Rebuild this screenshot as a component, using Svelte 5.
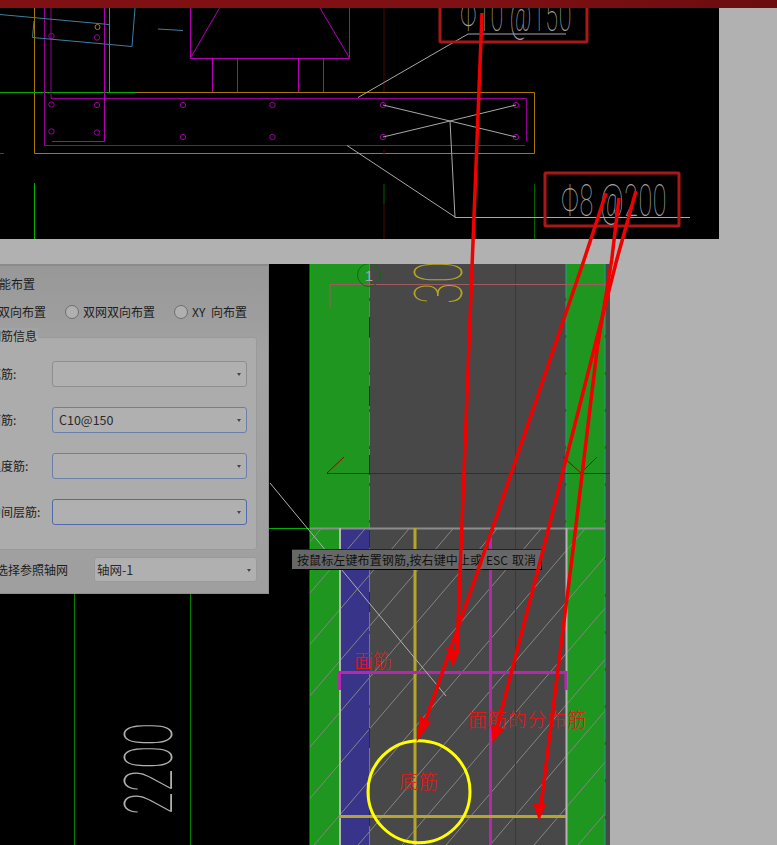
<script>
  const hatch = [];
  for (let i = 0; i < 16; i++) {
    const top = 233.700 + i * 44;
    hatch.push({ x1: top - 317 / 1.167, y1: 845, x2: top, y2: 528 });
  }
  const topCircles = [
    [51.5, 36], [97, 37.5], [51.5, 104.5], [97, 105], [183, 105], [272.5, 105], [383, 105], [516, 105],
    [51.5, 131.5], [97, 132.5], [183, 137], [272.5, 137], [383, 137], [516, 137]
  ];
  const rows = [
    { label: '底筋:', value: '', tone: 'plain' },
    { label: '面筋:', value: 'C10@150', tone: 'soft' },
    { label: '温度筋:', value: '', tone: 'soft' },
    { label: '中间层筋:', value: '', tone: 'focus' }
  ];
</script>

<div class="page">
  <div class="topbar"></div>

  <svg class="cad-top" viewBox="0 8 719 231" width="719" height="231">
    <g fill="none">
      <path d="M34.500 8V153.500H534.500V92.500H135M109.500 8V92" stroke="#a87800" />
      <path d="M0 92.500H135M34.500 183V239" stroke="#00b000" />
      <path d="M0 153.500H4" stroke="#007000" />
      <path d="M384 8V92M384 150V155M384 204V239" stroke="#4a0808" />
      <path d="M384 184V204M534.500 184V239" stroke="#006400" />
      <path d="M44.500 8V145.500H525M51 8V98.500H526.500V141" stroke="#960096" />
      <path d="M104.500 8V141.500H52M190.500 8V58.500H349.500V8M219.500 8L190.500 58M320 8L349.500 58M212.500 58V92M237.500 58V92M298.500 58V92M323.500 58V92" stroke="#b400b4" />
      {#each topCircles as c}
        <circle cx={c[0]} cy={c[1]} r="2.700" stroke="#a000a0" />
      {/each}
      <circle cx="97.500" cy="27" r="2.500" stroke="#a08030" />
      <path d="M0 14.500L109 24.500M34 21L32.500 37.500L132 46.500L135 8M158 29L183 30.500" stroke="#3f7f9f" />
      <path d="M358 97.500L468 34H566M383 105L450 121L516 137M383 137L450 121L516 105M450 121L455 217.500H690M347 145.500L455 217" stroke="#a8a8a8" />
      <rect x="440" y="6" width="147" height="36" rx="1" stroke="#a81818" stroke-width="3" />
      <rect x="545" y="173" width="134" height="53" rx="1" stroke="#a81818" stroke-width="3" />
    </g>
    <text class="cad-text" transform="translate(460 31) scale(.53 1)">Φ10 @150</text>
    <text class="cad-text" transform="translate(561 216) scale(.57 1)">Φ8 @200</text>
  </svg>

  <div class="lower">
    <svg class="cad-bottom" viewBox="0 264 610 581" width="610" height="581">
      <defs>
        <clipPath id="hatch-clip"><rect x="310" y="528" width="295" height="317" /></clipPath>
      </defs>
      <rect x="0" y="264" width="610" height="581" fill="#000" />
      <rect x="310" y="264" width="59" height="581" fill="#1f961f" />
      <rect x="369" y="264" width="197" height="581" fill="#484848" />
      <rect x="566" y="264" width="39" height="581" fill="#1f961f" />
      <rect x="605" y="264" width="5" height="581" fill="#484848" />
      <rect x="339" y="528" width="30" height="317" fill="#373489" />
      <path d="M310 264V845" stroke="#00c000" fill="none" />
      <g fill="none" clip-path="url(#hatch-clip)">
        {#each hatch as h}
          <line x1={h.x1} y1={h.y1} x2={h.x2} y2={h.y2} stroke="#858585" />
        {/each}
      </g>
      <path d="M310 528.500H269" stroke="#00b000" fill="none" />
      <path d="M74.500 594V845M190.500 594V845" stroke="#008000" fill="none" />
      <g fill="none">
        <path d="M369.500 264V845M566 264V528M605 264V845" stroke="#2a9a90" stroke-dasharray="34 3" />
        <path d="M369.500 317V337M369.500 386V406M369.500 455V475M369.500 530V548M369.500 592V612M369.500 728V748M369.500 806V826" stroke="#6a1020" />
        <path d="M515.500 264V845" stroke="#9a1010" />
        <path d="M330 307V284.500H607" stroke="#a05a60" />
        <path d="M327 473.500H610M327 473L344 457M563 457L581 473L597 457" stroke="#a00000" />
        <path d="M310 528.500H605" stroke="#8c8c8c" stroke-width="2" />
        <path d="M340 528V845M566.500 528V845" stroke="#b4b4b4" stroke-width="2" />
        <path d="M415 528V845" stroke="#b5a52a" stroke-width="3" />
        <path d="M490.500 537V845" stroke="#b428b0" stroke-width="3" />
        <path d="M490 527.500H510" stroke="#8a5a8a" />
        <path d="M339.500 690V672.500H566V690" stroke="#b428b0" stroke-width="3" />
        <path d="M339 816.500H566" stroke="#b5a530" stroke-width="3" />
        <circle cx="419" cy="791.700" r="51" stroke="#ffff00" stroke-width="3" />
        <path d="M270 483L446 696" stroke="#b0b0b0" />
        <circle cx="369" cy="275" r="11.500" stroke="#0a6e0a" />
      </g>
      <text class="ref-num" x="369" y="281">1</text>
      <text class="axis-text" transform="translate(462 304) rotate(-90) scale(.58 1)">30</text>
      <text class="dim-text" transform="translate(172 815) rotate(-90) scale(.63 1)">2200</text>
      <text class="note" x="354" y="668" textLength="38">面筋</text>
      <text class="note" x="468" y="727" textLength="118">面筋的分布筋</text>
      <text class="note" x="399" y="789" textLength="39">底筋</text>
    </svg>
  </div>

  <section class="dialog">
    <div class="title">智能布置</div>
    <div class="radios">
      <label class="radio"><span class="dot"></span>单网双向布置</label>
      <label class="radio"><span class="dot"></span>双网双向布置</label>
      <label class="radio"><span class="dot"></span>XY 向布置</label>
    </div>
    <div class="group">
      <div class="legend">钢筋信息</div>
      {#each rows as r}
        <div class="row">
          <span class="row-label">{r.label}</span>
          <div class="select {r.tone}"><span>{r.value}</span><i class="caret"></i></div>
        </div>
      {/each}
    </div>
    <div class="axis">
      <span class="axis-label">选择参照轴网</span>
      <div class="select axis-select"><span>轴网-1</span><i class="caret"></i></div>
    </div>
  </section>

  <div class="tip">按鼠标左键布置钢筋,按右键中止或 ESC 取消</div>

  <svg class="arrows" viewBox="0 0 777 845" width="777" height="845">
    <g fill="none" stroke="#f00000" stroke-width="3.500">
      <path d="M482 13L457 650" />
      <path d="M606 193L584 260L485 550L425 722" />
      <path d="M636 191L616.700 260L543 550L497 728" />
      <path d="M619 198L611.700 260L597 350L573 550L541 805" />
    </g>
    <g fill="#f00000">
      <path d="M446 648L460 650L453 667Z" />
      <path d="M416.500 742L420 716L431 722Z" />
      <path d="M492.500 743L491 725L504 729Z" />
      <path d="M539 821L533 803L546 804Z" />
    </g>
  </svg>
</div>

<style>
  :global(body) {
    margin: 0;
    background: #b1b1b1;
    overflow: hidden;
  }
  .page {
    position: relative;
    width: 777px;
    height: 845px;
    overflow: hidden;
    background: #b1b1b1;
    font-family: "Noto Sans CJK SC", "Liberation Sans", sans-serif;
  }
  .topbar {
    height: 8px;
    background: linear-gradient(90deg, #7f1114, #7f1114 60%, #6a0c0e);
  }
  svg {
    display: block;
  }
  .cad-top {
    background: #000;
  }
  .lower {
    margin-top: 25px;
  }
  .cad-text {
    font-family: Roboto, "Liberation Sans", sans-serif;
    font-weight: 100;
    font-size: 44px;
    letter-spacing: 1px;
    fill: #a0a0a0;
  }
  .ref-num {
    font-family: "Liberation Sans", sans-serif;
    font-size: 15px;
    text-anchor: middle;
    fill: #a8a8a8;
  }
  .axis-text {
    font-family: Roboto, sans-serif;
    font-weight: 100;
    font-size: 67px;
    fill: #b5a520;
  }
  .dim-text {
    font-family: Roboto, sans-serif;
    font-weight: 100;
    font-size: 67px;
    fill: #b0b0b0;
  }
  .note {
    font-family: "Noto Sans CJK SC", sans-serif;
    font-size: 19px;
    font-weight: 300;
    fill: #e01818;
  }
  .dialog {
    position: absolute;
    left: -60px;
    top: 264px;
    box-sizing: border-box;
    width: 329px;
    height: 330px;
    padding: 10px 12px 0 47px;
    background: linear-gradient(180deg, #989898, #a3a3a3 30%, #9f9f9f);
    border-top: 2px solid #8b8b8b;
    border-right: 1px solid #8e8e8e;
    border-bottom: 1px solid #8e8e8e;
    color: #1d1d1d;
    font-size: 12px;
    line-height: 16px;
  }
  .title {
    font-size: 12px;
  }
  .radios {
    display: flex;
    gap: 19px;
    margin: 12px 0 0 -31px;
    word-spacing: 3px;
  }
  .radio {
    display: flex;
    align-items: center;
    gap: 4px;
  }
  .dot {
    box-sizing: border-box;
    width: 14px;
    height: 14px;
    border: 1px solid #6e6e6e;
    border-radius: 50%;
    background: #b0b0b0;
  }
  .group {
    position: relative;
    box-sizing: border-box;
    width: 270px;
    height: 213px;
    margin-top: 17px;
    padding: 23px 9px 0 0;
    background: #acacac;
    border: 1px solid #9a9a9a;
    border-radius: 3px;
  }
  .legend {
    position: absolute;
    left: 1px;
    top: -10px;
    padding-right: 1px;
    background: linear-gradient(180deg, #a3a3a3 50%, #acacac 50%);
  }
  .row {
    display: flex;
    align-items: center;
    height: 26px;
    margin-bottom: 20px;
  }
  .row-label {
    width: 63px;
    flex: none;
    white-space: nowrap;
    margin-left: 1px;
  }
  .select {
    position: relative;
    box-sizing: border-box;
    flex: 1;
    height: 26px;
    padding: 0 6px;
    display: flex;
    align-items: center;
    background: #b0b0b0;
    border: 1px solid #8e8e8e;
    border-radius: 3px;
    color: #2a2a2a;
    font-size: 12.500px;
  }
  .select.soft {
    border-color: #6c7fa8;
  }
  .select.focus {
    border-color: #4f6ba8;
  }
  .caret {
    position: absolute;
    right: 5px;
    top: 11px;
    width: 0;
    height: 0;
    border-left: 2.500px solid transparent;
    border-right: 2.500px solid transparent;
    border-top: 3px solid #444;
  }
  .axis {
    display: flex;
    align-items: center;
    margin-top: 7px;
  }
  .axis-label {
    flex: none;
    width: 98px;
    margin-left: 9px;
    white-space: nowrap;
  }
  .axis-select {
    height: 25px;
    padding: 0 2px;
    border-color: #9a9a9a;
    margin-right: -1px;
  }
  .tip {
    position: absolute;
    left: 292px;
    top: 549px;
    box-sizing: border-box;
    height: 21px;
    padding: 0 5px;
    line-height: 20px;
    font-size: 12px;
    letter-spacing: .11px;
    word-spacing: 1px;
    white-space: nowrap;
    color: #111;
    background: #676767;
    border-right: 1px solid #000;
    border-bottom: 1px solid #000;
    border-top: 1px solid #222;
  }
  .arrows {
    position: absolute;
    left: 0;
    top: 0;
    pointer-events: none;
  }
</style>
